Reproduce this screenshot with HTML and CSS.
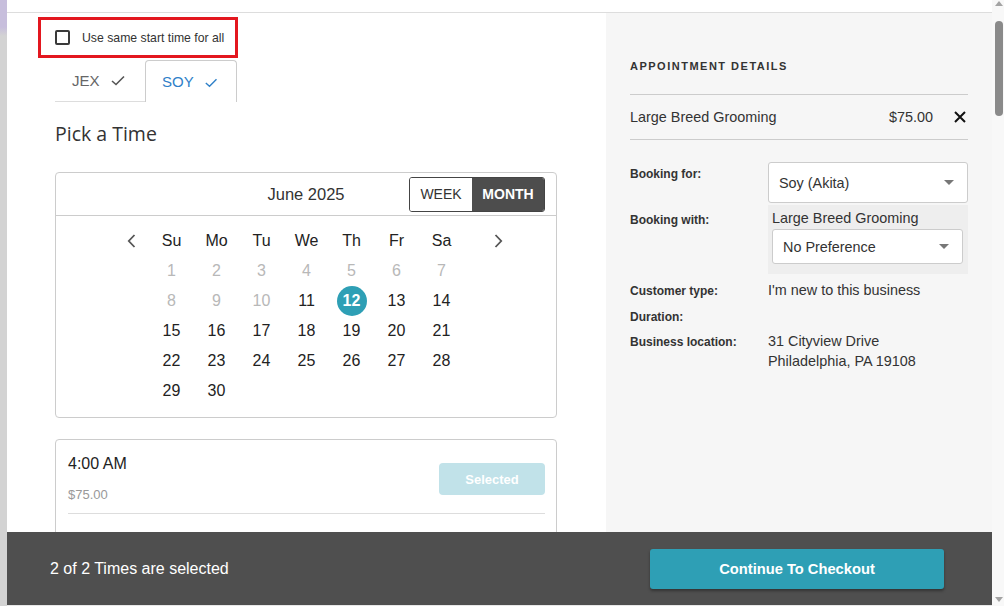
FILE: index.html
```
<!DOCTYPE html>
<html lang="en">
<head>
    <meta charset="UTF-8">
    <title>Pick a Time - Booking</title>
    <link rel="stylesheet" href="styles.css">
</head>
<body>
<div class="page">
    <div class="backdrop-edge"></div>

    <div class="modal">
        <div class="modal-top"></div>

        <div class="modal-body">
            <section class="picker">
                <label class="same-time">
                    <span class="checkbox"></span>
                    <span>Use same start time for all</span>
                </label>

                <div class="pet-tabs">
                    <div class="pet-tab">JEX
                        <svg width="14" height="11" viewBox="0 0 14 11"><path d="M1 6 L5 9.5 L13 1.5" fill="none" stroke="#555" stroke-width="1.6"/></svg>
                    </div>
                    <div class="pet-tab active">SOY
                        <svg width="15" height="11" viewBox="0 0 15 11"><path d="M1 6 L5.5 10 L14 1.5" fill="none" stroke="#2f80c8" stroke-width="1.7"/></svg>
                    </div>
                </div>

                <h2 class="pick-title">Pick a Time</h2>

                <div class="calendar">
                    <div class="cal-head">
                        <span></span>
                        <span class="cal-month">June 2025</span>
                        <div class="view-toggle">
                            <button class="view-btn week">WEEK</button>
                            <button class="view-btn month on">MONTH</button>
                        </div>
                    </div>
                    <div class="cal-body">
                        <button class="cal-nav prev">
                            <svg width="9" height="14" viewBox="0 0 9 14"><path d="M7.5 1 L1.8 7 L7.5 13" fill="none" stroke="#555" stroke-width="1.8"/></svg>
                        </button>
                        <div class="cal-grid">
                            <span class="dow">Su</span><span class="dow">Mo</span><span class="dow">Tu</span><span class="dow">We</span><span class="dow">Th</span><span class="dow">Fr</span><span class="dow">Sa</span>
                            <span class="day past">1</span><span class="day past">2</span><span class="day past">3</span><span class="day past">4</span><span class="day past">5</span><span class="day past">6</span><span class="day past">7</span>
                            <span class="day past">8</span><span class="day past">9</span><span class="day past">10</span><span class="day">11</span><span class="day selected"><b>12</b></span><span class="day">13</span><span class="day">14</span>
                            <span class="day">15</span><span class="day">16</span><span class="day">17</span><span class="day">18</span><span class="day">19</span><span class="day">20</span><span class="day">21</span>
                            <span class="day">22</span><span class="day">23</span><span class="day">24</span><span class="day">25</span><span class="day">26</span><span class="day">27</span><span class="day">28</span>
                            <span class="day">29</span><span class="day">30</span>
                        </div>
                        <button class="cal-nav next">
                            <svg width="9" height="14" viewBox="0 0 9 14"><path d="M1.5 1 L7.2 7 L1.5 13" fill="none" stroke="#555" stroke-width="1.8"/></svg>
                        </button>
                    </div>
                </div>

                <div class="slots">
                    <div class="slot">
                        <div>
                            <div class="slot-time">4:00 AM</div>
                            <div class="slot-price">$75.00</div>
                        </div>
                        <button class="slot-btn">Selected</button>
                    </div>
                </div>
            </section>

            <aside class="details">
                <h3 class="details-title">APPOINTMENT DETAILS</h3>
                <div class="service-row">
                    <span class="service-name">Large Breed Grooming</span>
                    <span class="service-price">$75.00</span>
                    <svg class="remove" width="12" height="12" viewBox="0 0 12 12"><path d="M1 1 L11 11 M11 1 L1 11" stroke="#111" stroke-width="2"/></svg>
                </div>

                <div class="detail-row first">
                    <span class="detail-label pad4">Booking for:</span>
                    <div class="select big"><span>Soy (Akita)</span><i class="caret"></i></div>
                </div>
                <div class="detail-row second">
                    <span class="detail-label pad7">Booking with:</span>
                    <div class="staff-box">
                        <div class="staff-service">Large Breed Grooming</div>
                        <div class="select small"><span>No Preference</span><i class="caret"></i></div>
                    </div>
                </div>
                <div class="detail-row info">
                    <span class="detail-label">Customer type:</span>
                    <span class="detail-value">I'm new to this business</span>
                </div>
                <div class="detail-row info duration">
                    <span class="detail-label">Duration:</span>
                    <span class="detail-value"></span>
                </div>
                <div class="detail-row info last">
                    <span class="detail-label">Business location:</span>
                    <span class="detail-value">31 Cityview Drive<br>Philadelphia, PA 19108</span>
                </div>
            </aside>
        </div>

        <div class="footer">
            <span class="footer-count">2 of 2 Times are selected</span>
            <button class="checkout-btn">Continue To Checkout</button>
        </div>
    </div>

    <div class="scrollbar">
        <i class="arrow-up"></i>
        <div class="thumb"></div>
        <i class="arrow-down"></i>
    </div>
</div>
</body>
</html>
```

FILE: styles.css
```
html, body {
    margin: 0;
    padding: 0;
}
body {
    font-family: "Liberation Sans", Arial, sans-serif;
    color: #333;
    background: #fff;
}
button {
    font-family: inherit;
    border: none;
    padding: 0;
    cursor: pointer;
}
.page {
    display: flex;
    width: 1004px;
    height: 606px;
    overflow: hidden;
}
.backdrop-edge {
    width: 7px;
    flex-shrink: 0;
    background: linear-gradient(to bottom, #c7bedc 0, #c7bedc 27px, #d3d3d3 36px);
}
.modal {
    flex: 1;
    display: flex;
    flex-direction: column;
    min-width: 0;
}
.modal-top {
    height: 12px;
    border-bottom: 1px solid #ddd;
    background: #fff;
}
.modal-body {
    flex: 1;
    display: flex;
    min-height: 0;
    overflow: hidden;
}

/* left column */
.picker {
    width: 599px;
    box-sizing: border-box;
    padding: 4px 49px 0 48px;
    flex-shrink: 0;
}
.same-time {
    display: flex;
    align-items: center;
    width: 200px;
    height: 41px;
    box-sizing: border-box;
    margin-left: -17px;
    padding-left: 14px;
    border: 3px solid #e3171f;
    font-size: 12.25px;
    color: #333;
}
.checkbox {
    width: 15px;
    height: 15px;
    box-sizing: border-box;
    border: 2px solid #3a3a3a;
    border-radius: 2px;
    margin-right: 12px;
    background: #fff;
}
.pet-tabs {
    display: flex;
    margin-top: 2px;
    height: 42px;
}
.pet-tab {
    display: flex;
    align-items: center;
    gap: 11px;
    padding: 0 19px 0 17px;
    font-size: 15px;
    color: #666;
    border-bottom: 1px solid #ddd;
    box-sizing: border-box;
    width: 90px;
}
.pet-tab.active {
    width: 92px;
    color: #2f80c8;
    border: 1px solid #ccc;
    border-bottom: none;
    border-radius: 4px 4px 0 0;
    padding-left: 16px;
}
.pet-tab.active svg {
    margin-top: 2px;
}
.pick-title {
    margin: 20px 0 0;
    font-family: "Open Sans", "Liberation Sans", sans-serif;
    font-weight: 400;
    font-size: 19.5px;
    line-height: 24px;
    color: #333;
}

/* calendar */
.calendar {
    margin-top: 26px;
    border: 1px solid #ccc;
    border-radius: 4px;
}
.cal-head {
    display: grid;
    grid-template-columns: 1fr auto 1fr;
    align-items: center;
    height: 42px;
    padding: 0 11px;
    border-bottom: 1px solid #ccc;
}
.cal-month {
    font-size: 16.5px;
    color: #333;
}
.view-toggle {
    justify-self: end;
    display: flex;
    border: 1px solid #444;
    border-radius: 3px;
    overflow: hidden;
}
.view-btn {
    height: 33px;
    font-size: 14px;
    background: #fff;
    color: #333;
}
.view-btn.week {
    width: 62px;
}
.view-btn.month {
    width: 72px;
}
.view-btn.on {
    background: #4d4d4d;
    color: #fff;
    font-weight: bold;
}
.cal-body {
    display: flex;
    align-items: flex-start;
    padding: 10px 0 11px 60px;
}
.cal-nav {
    width: 30px;
    height: 30px;
    background: none;
    display: flex;
    align-items: center;
    justify-content: center;
}
.cal-grid {
    display: grid;
    grid-template-columns: repeat(7, 45px);
    grid-auto-rows: 30px;
    margin: 0 19px 0 3px;
}
.dow, .day {
    display: flex;
    align-items: center;
    justify-content: center;
    font-size: 16px;
    color: #222;
}
.day.past {
    color: #b8b8b8;
}
.day.selected b {
    width: 30px;
    height: 30px;
    border-radius: 50%;
    background: #2e9fb5;
    color: #fff;
    display: flex;
    align-items: center;
    justify-content: center;
}

/* time slots */
.slots {
    margin-top: 21px;
    border: 1px solid #ccc;
    border-radius: 4px;
    padding: 0 11px 40px 12px;
}
.slot {
    display: flex;
    justify-content: space-between;
    align-items: center;
    padding: 13px 0 8px;
    border-bottom: 1px solid #ddd;
}
.slot-time {
    font-size: 16px;
    line-height: 22px;
    color: #222;
}
.slot-price {
    margin-top: 10px;
    font-size: 13px;
    line-height: 20px;
    color: #999;
}
.slot-btn {
    width: 106px;
    height: 32px;
    border-radius: 4px;
    background: #c1e2e9;
    color: #fff;
    font-weight: bold;
    font-size: 13px;
}

/* right column */
.details {
    flex: 1;
    background: #f6f6f6;
    padding: 46px 24px 0;
}
.details-title {
    margin: 0;
    font-size: 11px;
    line-height: 14px;
    font-weight: bold;
    letter-spacing: 1.5px;
    color: #333;
}
.service-row {
    display: flex;
    align-items: center;
    height: 44px;
    margin-top: 21px;
    border-top: 1px solid #ccc;
    border-bottom: 1px solid #ccc;
    font-size: 14.4px;
}
.service-name {
    flex: 1;
}
.service-price {
    margin-right: 21px;
}
.remove {
    margin-right: 2px;
}
.detail-row {
    display: flex;
    font-size: 14.4px;
}
.detail-row.first {
    margin-top: 22px;
}
.detail-row.second {
    margin-top: 2px;
}
.detail-row.info {
    margin-top: 6px;
    line-height: 20px;
}
.detail-row.duration {
    margin-top: 5px;
}
.detail-row.last {
    margin-top: 4px;
}
.detail-label {
    width: 138px;
    flex-shrink: 0;
    font-size: 12px;
    font-weight: bold;
    line-height: 16px;
    color: #333;
}
.detail-row.info .detail-label {
    line-height: 20px;
    padding-top: 1px;
}
.pad4 {
    padding-top: 4px;
}
.pad7 {
    padding-top: 7px;
}
.select {
    display: flex;
    align-items: center;
    justify-content: space-between;
    box-sizing: border-box;
    background: #fff;
    border: 1px solid #ccc;
    border-radius: 3px;
    color: #333;
}
.select.big {
    width: 200px;
    height: 41px;
    padding: 0 13px 0 10px;
}
.select.small {
    width: 191px;
    height: 35px;
    padding: 0 13px 0 10px;
}
.caret {
    width: 0;
    height: 0;
    border-left: 5px solid transparent;
    border-right: 5px solid transparent;
    border-top: 5px solid #777;
}
.staff-box {
    width: 200px;
    box-sizing: border-box;
    background: #eee;
    padding: 3px 5px 10px 4px;
}
.staff-service {
    line-height: 21px;
}

/* bottom bar */
.footer {
    height: 73px;
    flex-shrink: 0;
    display: flex;
    align-items: center;
    justify-content: space-between;
    padding: 0 48px 0 43px;
    background: #4f4f4f;
    border-bottom: 1px solid #e8e8e8;
}
.footer-count {
    font-size: 16px;
    color: #fff;
}
.checkout-btn {
    width: 294px;
    height: 40px;
    border-radius: 3px;
    background: #2e9fb5;
    color: #fff;
    font-weight: bold;
    font-size: 14.7px;
    box-shadow: 0 2px 3px rgba(0, 0, 0, 0.35);
}

/* fake page scrollbar */
.scrollbar {
    width: 12px;
    flex-shrink: 0;
    background: #f8f8f8;
    display: flex;
    flex-direction: column;
    align-items: center;
}
.arrow-up, .arrow-down {
    width: 0;
    height: 0;
    border-left: 4px solid transparent;
    border-right: 4px solid transparent;
    margin-left: 2px;
}
.arrow-up {
    margin-top: 1px;
    border-bottom: 5px solid #a3a3a3;
}
.arrow-down {
    margin-top: auto;
    margin-bottom: 4px;
    border-top: 5px solid #a3a3a3;
}
.thumb {
    width: 8px;
    height: 95px;
    margin: 15px 0 0 2px;
    border-radius: 4px;
    background: #8a8a8a;
}
```
